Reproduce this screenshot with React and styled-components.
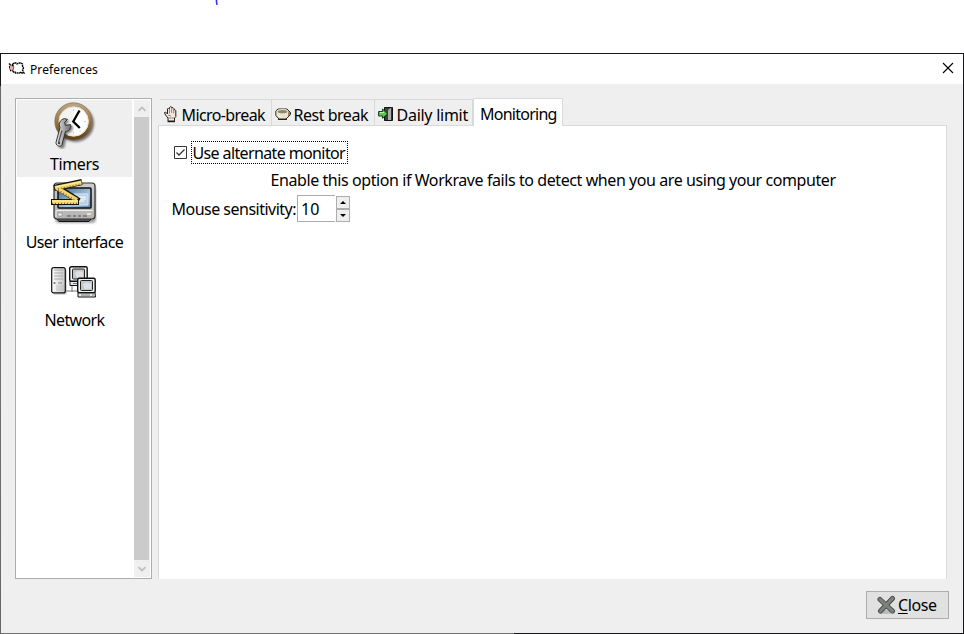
import React from "react";
import styled, { createGlobalStyle } from "styled-components";

const Global = createGlobalStyle`
  * { box-sizing: border-box; }
  body { margin: 0; background: #fff; overflow: hidden; }
  svg { display: block; flex: none; }
`;

const Desktop = styled.div`
  width: 964px;
  height: 634px;
  display: flex;
  flex-direction: column;
  background: #fff;
  font: 16px/20px "Noto Sans", "Open Sans", sans-serif;
  color: #000;
`;
const Backdrop = styled.div`
  height: 53px;
  flex: none;
  padding-left: 215px;
`;
const Window = styled.div`
  height: 581px;
  display: grid;
  grid-template-columns: 1px 962px 1px;
  grid-template-rows: 1px 579px 1px;
  background: #17171a;
`;
const LeftEdge = styled.div`
  grid-column: 1;
  grid-row: 2;
  background: linear-gradient(#17171a 32px, #69696b 32px, #777 160px, #666 100%);
`;
const BottomEdge = styled.div`
  grid-column: 1 / 3;
  grid-row: 3;
  width: 514px;
  background: #707070;
`;
const Frame = styled.div`
  grid-column: 2;
  grid-row: 2;
  background: #efefef;
  display: flex;
  flex-direction: column;
`;
const TitleBar = styled.div`
  height: 30px;
  background: #fff;
  display: flex;
  align-items: center;
  padding: 0 9px 1px 7px;
  gap: 5px;
  font-size: 12px;
`;
const Title = styled.span`
  flex: 1;
  padding-top: 2px;
  letter-spacing: ${(p) => p.$spacing};
`;
const CloseGlyph = styled.svg`
  margin-bottom: 2px;
`;
const Body = styled.div`
  display: flex;
  height: 495px;
  padding: 14px 16px 0 14px;
  gap: 6px;
`;
const Sidebar = styled.div`
  width: 137px;
  height: 481px;
  border: 1px solid #acacb1;
  background: #fff;
  padding: 1px 0 1px 1px;
  display: flex;
  gap: 2px;
`;
const Categories = styled.div`
  width: 115px;
`;
const Category = styled.div`
  height: 77px;
  margin-bottom: 1px;
  padding-top: 1px;
  background: ${(p) => (p.$selected ? "#efefef" : "#fff")};
  display: flex;
  flex-direction: column;
  align-items: center;
  gap: 5px;

  svg {
    margin-right: 3px;
  }
`;
const Text = styled.span`
  white-space: nowrap;
  letter-spacing: ${(p) => p.$spacing || "0"};
`;
const Scrollbar = styled.div`
  width: 16px;
  display: flex;
  flex-direction: column;
  background: #efefef;
`;
const ScrollButton = styled.div`
  width: 15px;
  height: 17px;
  display: flex;
  align-items: center;
  justify-content: center;
`;
const Thumb = styled.div`
  flex: 1;
  width: 15px;
  background: #cbcbcb;
`;
const Notebook = styled.div`
  width: 789px;
  display: flex;
  flex-direction: column;
`;
const Tabs = styled.div`
  height: 28px;
  display: flex;
  align-items: flex-end;
  padding-left: 2px;
  margin-bottom: -1px;
`;
const Tab = styled.div`
  width: ${(p) => p.$w}px;
  height: ${(p) => (p.$active ? 28 : 26)}px;
  padding: ${(p) => (p.$active ? "2px 0 0 6px" : "4px 0 0 3px")};
  display: flex;
  align-items: center;
  gap: 2.5px;
  background: ${(p) => (p.$active ? "#fff" : "#efefef")};
  border-top: 1px solid #d9d9d9;
  border-right: 1px solid #d9d9d9;
  border-left: ${(p) => (p.$active ? "1px solid #d9d9d9" : "0")};
  margin-bottom: ${(p) => (p.$active ? 0 : 1)}px;
  z-index: ${(p) => (p.$active ? 1 : 0)};
`;
const Page = styled.div`
  height: 454px;
  background: #fff;
  border: 1px solid #d9d9d9;
  border-bottom: 0;
  padding: 15px 0 0 12px;
`;
const CheckRow = styled.div`
  height: 23px;
  display: flex;
  align-items: center;
  gap: 4px;
  padding-left: 3px;
`;
const FocusText = styled.div`
  width: 157px;
  height: 23px;
  padding: 1px 0 0 0.5px;
  border: 1px dotted #000;
`;
const Hint = styled.div`
  height: 31px;
  padding: 6px 0 0 99.5px;
`;
const SpinRow = styled.div`
  display: flex;
  align-items: center;
  height: 27px;
`;
const SpinLabel = styled.div`
  width: 126px;
  padding-left: 0.5px;
`;
const Entry = styled.div`
  width: 38px;
  height: 27px;
  border: 1px solid #aaaab0;
  border-right: 0;
  padding: 3px 0 0 3px;
`;
const Steppers = styled.div`
  width: 15px;
  height: 26px;
  display: grid;
  grid-template-rows: 13px 13px;
  margin-left: 1px;
`;
const Step = styled.div`
  width: 14px;
  background: #efefef;
  border: 1px solid #adadad;
  display: flex;
  align-items: center;
  justify-content: center;
`;
const Footer = styled.div`
  display: flex;
  justify-content: flex-end;
  padding: 12px 14px 0 0;
`;
const CloseButton = styled.button`
  width: 83px;
  height: 28px;
  background: #e1e1e1;
  border: 1px solid #adadad;
  display: flex;
  align-items: center;
  gap: 1px;
  padding: 0 0 0 9px;
  font: inherit;
  color: #000;
`;
const Mnemonic = styled.span`
  text-decoration: underline;
  text-decoration-thickness: 1px;
  text-underline-offset: 2px;
`;

const Sheep = () => (
  <svg width="17" height="14" viewBox="0 0 17 14">
    <path d="M4.500 2.500L6 1h2l1 1 2-1h2l1.500 1v2l1 2-1 2 1.500 3h-2l-1-1-1.500 1h-4L7 10H5.500L4.500 8.500z" fill="#fff" stroke="#000" strokeWidth="1.400" strokeDasharray="2 .5" />
    <path d="M1.500 4l2.500-1 2 2-1 3-2 1-1.500-2z" fill="#f0aaa8" stroke="#222" strokeWidth=".6" />
    <path d="M1 1.500l1.500 1.500M1 5h1M4 3.500h1.500M2 8.500h1" stroke="#000" strokeWidth="1.400" />
  </svg>
);
const TimerIcon = () => (
  <svg width="48" height="48" viewBox="0 0 48 48">
    <defs>
      <linearGradient id="brass" x1="0" y1="0" x2="0" y2="1"><stop stopColor="#b9a88d" /><stop offset=".35" stopColor="#a78656" /><stop offset="1" stopColor="#5b3e14" /></linearGradient>
      <linearGradient id="steel"><stop stopColor="#eee" /><stop offset=".5" stopColor="#aaa" /><stop offset="1" stopColor="#666" /></linearGradient>
      <filter id="soft" x="-20%" y="-20%" width="150%" height="150%"><feGaussianBlur stdDeviation="1.300" /></filter>
    </defs>
    <circle cx="26.500" cy="22.500" r="18.500" fill="#333" opacity=".65" filter="url(#soft)" />
    <circle cx="24.500" cy="20.500" r="18.700" fill="url(#brass)" stroke="#80705a" strokeWidth=".7" />
    <circle cx="24.700" cy="20.500" r="14.700" fill="#f3f3f1" stroke="#eee0c8" strokeWidth="1" />
    <path d="M24.700 6.800a13.800 13.800 0 0 1 0 27.600" fill="#fff" />
    <g fill="#999"><circle cx="24.700" cy="9" r=".6" /><circle cx="36" cy="20.500" r=".6" /><circle cx="24.700" cy="32" r=".6" /><circle cx="31" cy="11" r=".5" /><circle cx="31" cy="30" r=".5" /></g>
    <path d="M30.500 9.500L24.300 20.500l6.500 6.500" fill="none" stroke="#000" strokeWidth="2.300" />
    <path d="M8 41l3.500-16c-2-4 .5-8 4.500-9l3 1-3 3 1 3 5-1 .500 2c-1 4-4 5-5.500 5L14 43c-1 3-6 2-6-2z" transform="translate(1.500 3)" fill="#333" opacity=".6" filter="url(#soft)" />
    <g transform="translate(0 1.500)">
      <path d="M7 40l4-15c-2-4 .5-8 4.500-9l3 1-3 3 1 3 5-1 .500 2c-1 4-4 5-5.500 5L13 42c-1 3-6 2-6-2z" fill="url(#steel)" stroke="#333" />
      <path d="M13 28L9.500 40" stroke="#555" strokeWidth="1.200" />
      <circle cx="10" cy="40.500" r="1.200" fill="#444" />
    </g>
  </svg>
);
const UIIcon = () => (
  <svg width="48" height="48" viewBox="0 0 48 48">
    <defs>
      <linearGradient id="screen" x1="0" y1="0" x2="1" y2="1"><stop stopColor="#42658b" /><stop offset=".6" stopColor="#a5c4df" /><stop offset="1" stopColor="#5d8ab2" /></linearGradient>
      <linearGradient id="shell" x1="0" y1="0" x2="0" y2="1"><stop stopColor="#ccc" /><stop offset="1" stopColor="#b4b4b4" /></linearGradient>
      <filter id="shade" x="-20%" y="-20%" width="140%" height="150%"><feGaussianBlur stdDeviation="1" /></filter>
    </defs>
    <rect x="6" y="7" width="41" height="37" rx="4" fill="#333" opacity=".45" filter="url(#shade)" />
    <path d="M7 38.500h36l-3 4H10z" fill="#555" stroke="#111" />
    <rect x="5" y="4" width="41" height="36" rx="3" fill="url(#shell)" stroke="#303030" strokeWidth="1.200" />
    <path d="M7 31.500h37M7 32v6" stroke="#eee" />
    <rect x="9" y="9" width="33" height="20" rx="1" fill="url(#screen)" stroke="#111" strokeWidth="1.500" />
    <path d="M25 15h14v11H25z" fill="#b9d1e6" stroke="#d7e6f1" />
    <path d="M29 18h8M29 20h8M29 22h6" stroke="#fff" />
    <path d="M18 37h4m2 0h3m2 0h3m2 0h4" stroke="#555" strokeWidth="1.200" />
    <path d="M9 34h4v3H9z" fill="#eee" stroke="#777" strokeWidth=".5" />
    <path d="M38 34h4v2h-4z" fill="#f0dfb0" />
    <path d="M5 9L33 3M8 8l22 14M2 23h28" stroke="#16130a" strokeWidth="6" />
    <path d="M6 9L32.500 3.500M8 9l20 12M3 23h26" stroke="#f2d56d" strokeWidth="4" />
    <path d="M6 8l26-5M3 22h26" stroke="#fff0ad" strokeWidth="1" />
    <path d="M6 10.500L32 5M9 11l18 10.500M3 24.300h26" stroke="#8a6213" strokeWidth="1.200" strokeDasharray="1 2" />
  </svg>
);
const NetworkIcon = () => (
  <svg width="48" height="48" viewBox="0 0 48 48">
    <defs>
      <linearGradient id="tower"><stop stopColor="#fff" /><stop offset="1" stopColor="#c5c5c5" /></linearGradient>
      <g id="terminal">
        <path d="M1 15h17l.5 4.500H1z" fill="#e8e8e8" stroke="#111" />
        <rect x=".7" y=".7" width="17.500" height="14.500" rx="1.500" fill="#f3f3f3" stroke="#111" strokeWidth="1.400" />
        <rect x="3.500" y="3" width="12" height="10" rx="1" fill="#c3c8cb" stroke="#222" />
        <path d="M6 7l3-2 5 1v5l-6 1z" fill="#dde1e4" />
        <path d="M4 17.500h9M15 17.500h2" stroke="#777" />
      </g>
    </defs>
    <path d="M15 29v5h13M23 24v11" fill="none" stroke="#777" />
    <rect x="4" y="12" width="14" height="26" rx="2" fill="#888" opacity=".3" />
    <rect x="2.700" y="10.700" width="13.600" height="25.200" rx="2" fill="url(#tower)" stroke="#111" strokeWidth="1.200" />
    <path d="M5 13h9M5 16h9M5 19h9M5 22h9" stroke="#999" strokeWidth=".8" />
    <path d="M8 28v6M10 28v6M12 28v6M14 28v6" stroke="#bbb" strokeWidth=".8" />
    <circle cx="5.500" cy="26" r="1.100" fill="#777" /><path d="M9 26h4" stroke="#888" />
    <use href="#terminal" x="20" y="9" />
    <use href="#terminal" x="28" y="20.500" />
  </svg>
);
const Hand = () => (
  <svg width="16" height="18" viewBox="0 0 16 18">
    <path d="M5 15v-3L2.500 9 1.500 6.500l1-.5L4.500 8V3L5.500 2l1 1V1.500L7.500.7 9 1.500l1 .2 1 1v1l1 0 .8 1v6L11.500 12v3z" fill="#f6e8df" stroke="#24201d" />
    <path d="M6.500 2.500v5M8.700 2v5M10.700 3.500v4M5 9l3 1M5 12h6" stroke="#776b64" strokeWidth=".8" />
    <path d="M4.500 15.700h7.500" stroke="#000" />
  </svg>
);
const Cup = () => (
  <svg width="16" height="18" viewBox="0 0 16 18">
    <path d="M12 5h2l1.500 1.500v2L14 10h-2" fill="#ddd" stroke="#222" />
    <path d="M.8 5L3 3h9l2 2v5l-3 3H4L.8 9.500z" fill="#eee1c9" stroke="#302b21" />
    <ellipse cx="7.500" cy="5.700" rx="5.500" ry="2.200" fill="#8f8960" stroke="#eee" />
    <path d="M3 13.500h9" stroke="#222" /><path d="M3 9.500l3 1.500" stroke="#fff" />
  </svg>
);
const Exit = () => (
  <svg width="16" height="18" viewBox="0 0 16 18">
    <path d="M6.500 1.500h8v13h-8z" fill="#3b403f" stroke="#111" />
    <path d="M10 4l3.500-2.500v12.500H10z" fill="#a9afad" />
    <path d="M13.500 2v12" stroke="#303333" />
    <path d="M.6 5.500h4V3l4.900 4.800-4.900 4.500V10h-4z" fill="#5fcb55" stroke="#123f16" />
    <path d="M2 6.500h4" stroke="#b9f5a6" />
  </svg>
);

const categories = [
  { label: "Timers", icon: TimerIcon, spacing: "-.4px" },
  { label: "User interface", icon: UIIcon, spacing: "-.58px" },
  { label: "Network", icon: NetworkIcon, spacing: "-.65px" },
];
const tabs = [
  { label: "Micro-break", icon: Hand, w: 112, spacing: "-.6px" },
  { label: "Rest break", icon: Cup, w: 103, spacing: "-.48px" },
  { label: "Daily limit", icon: Exit, w: 98, spacing: "-.26px" },
  { label: "Monitoring", w: 90, spacing: "-.75px", active: true },
];

export default function App() {
  return (
    <Desktop>
      <Global />
      <Backdrop>
        <svg width="4" height="5" viewBox="0 0 4 5"><path d="M1.500 0v2l.5 2.800" fill="none" stroke="#3431ef" strokeWidth="1.600" /></svg>
      </Backdrop>
      <Window>
        <LeftEdge />
        <BottomEdge />
        <Frame>
          <TitleBar>
            <Sheep />
            <Title $spacing=".1px">Preferences</Title>
            <CloseGlyph width="12" height="12" viewBox="0 0 12 12"><path d="M1 1l10 10M11 1L1 11" stroke="#000" strokeWidth="1.100" /></CloseGlyph>
          </TitleBar>
          <Body>
            <Sidebar>
              <Categories>
                {categories.map(({ label, icon: Icon, spacing }, i) => (
                  <Category key={label} $selected={i === 0}>
                    <Icon />
                    <Text $spacing={spacing}>{label}</Text>
                  </Category>
                ))}
              </Categories>
              <Scrollbar>
                <ScrollButton><svg width="8" height="6" viewBox="0 0 8 6"><path d="M.5 5L4 1.500 7.500 5" fill="none" stroke="#bdbdbd" strokeWidth="1.700" /></svg></ScrollButton>
                <Thumb />
                <ScrollButton><svg width="8" height="6" viewBox="0 0 8 6"><path d="M.5 1L4 4.500 7.500 1" fill="none" stroke="#bdbdbd" strokeWidth="1.700" /></svg></ScrollButton>
              </Scrollbar>
            </Sidebar>
            <Notebook>
              <Tabs>
                {tabs.map(({ label, icon: Icon, w, spacing, active }) => (
                  <Tab key={label} $w={w} $active={active}>
                    {Icon && <Icon />}
                    <Text $spacing={spacing}>{label}</Text>
                  </Tab>
                ))}
              </Tabs>
              <Page>
                <CheckRow>
                  <svg width="13" height="13" viewBox="0 0 13 13"><path d="M.5.5h12v12H.5z" fill="#fff" stroke="#333" /><path d="M2.500 6.500L5 9l5.500-5.500" fill="none" stroke="#333" strokeWidth="1.300" /></svg>
                  <FocusText><Text $spacing="-.62px">Use alternate monitor</Text></FocusText>
                </CheckRow>
                <Hint><Text $spacing="-.42px">Enable this option if Workrave fails to detect when you are using your computer</Text></Hint>
                <SpinRow>
                  <SpinLabel><Text $spacing="-.51px">Mouse sensitivity:</Text></SpinLabel>
                  <Entry>10</Entry>
                  <Steppers>
                    <Step><svg width="6" height="3" viewBox="0 0 6 3"><path d="M0 3L3 0l3 3z" /></svg></Step>
                    <Step><svg width="6" height="3" viewBox="0 0 6 3"><path d="M0 0l3 3 3-3z" /></svg></Step>
                  </Steppers>
                </SpinRow>
              </Page>
            </Notebook>
          </Body>
          <Footer>
            <CloseButton>
              <svg width="21" height="20" viewBox="0 0 21 20">
                <ellipse cx="10.500" cy="17" rx="7" ry="2" fill="#bbb" />
                <path d="M4 4.500L16.500 16M16.500 3.500L4.500 16" stroke="#454846" strokeWidth="5" strokeLinecap="round" />
                <path d="M4 4.500L16.500 16M16.500 3.500L4.500 16" stroke="#7e827f" strokeWidth="3.200" strokeLinecap="round" />
              </svg>
              <Text $spacing="-.4px"><Mnemonic>C</Mnemonic>lose</Text>
            </CloseButton>
          </Footer>
        </Frame>
      </Window>
    </Desktop>
  );
}
